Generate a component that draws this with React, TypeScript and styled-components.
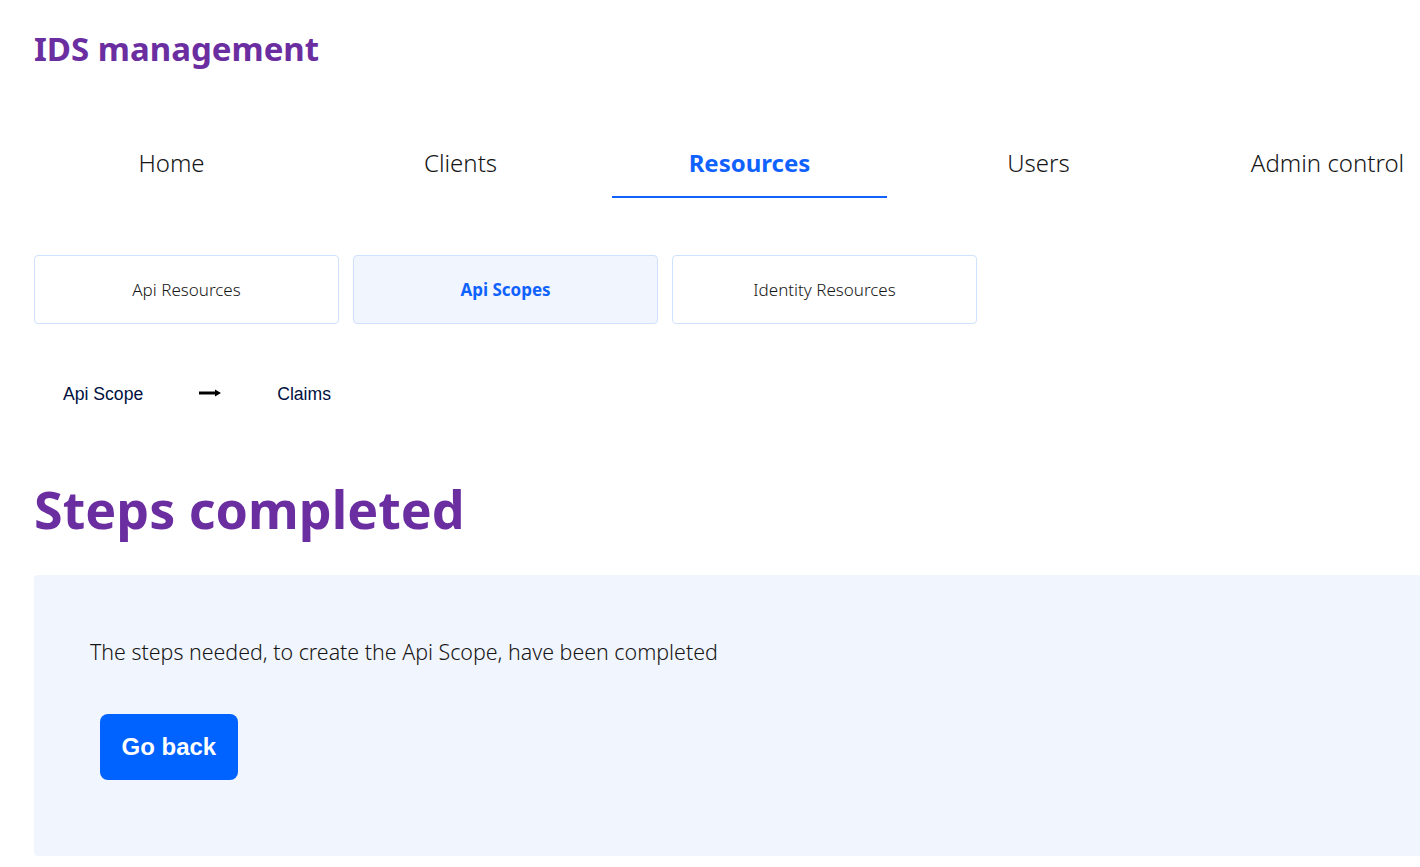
import React, { useState } from 'react';
import styled, { createGlobalStyle } from 'styled-components';

const GlobalStyle = createGlobalStyle`
  body {
    margin: 0;
    background: #ffffff;
    font-family: "Noto Sans", "Open Sans", sans-serif;
    color: #161616;
  }
`;

const Page = styled.div`
  padding: 0 0 0 34px;
  width: 1470px;
`;

const Brand = styled.h1`
  margin: 0;
  padding-top: 26px;
  height: 130px;
  box-sizing: border-box;
  font-size: 33px;
  font-weight: 700;
  color: #6b2ea1;
  line-height: 46px;
`;

const Nav = styled.nav`
  display: flex;
  gap: 14px;
`;

const NavTab = styled.div<{ $active?: boolean }>`
  width: 275px;
  height: 68px;
  display: flex;
  align-items: center;
  justify-content: center;
  box-sizing: border-box;
  padding-bottom: 2px;
  font-size: 24px;
  font-weight: ${p => (p.$active ? 700 : 300)};
  color: ${p => (p.$active ? '#0f62fe' : '#161616')};
  border-bottom: 2px solid ${p => (p.$active ? '#0f62fe' : 'transparent')};
  cursor: pointer;
`;

const SubNav = styled.div`
  display: flex;
  gap: 14px;
  margin-top: 57px;
`;

const SubTab = styled.div<{ $active?: boolean }>`
  width: 305px;
  height: 69px;
  box-sizing: border-box;
  border: 1px solid #d0e2ff;
  border-radius: 4px;
  display: flex;
  align-items: center;
  justify-content: center;
  font-size: 17px;
  font-weight: ${p => (p.$active ? 700 : 300)};
  color: ${p => (p.$active ? '#0f62fe' : '#161616')};
  background: ${p => (p.$active ? '#f1f5fd' : '#ffffff')};
  cursor: pointer;
`;

const Crumbs = styled.div`
  display: flex;
  align-items: center;
  margin-top: 56px;
  padding-left: 29px;
  height: 28px;
  font-family: "Liberation Sans", Arial, sans-serif;
  font-size: 17.6px;
  color: #001141;
`;

const Crumb = styled.span``;

const Arrow = styled.span`
  display: inline-flex;
  margin: 0 56px 3px 56px;
  color: #000000;
`;

const Heading = styled.h2`
  margin: 65px 0 0 0;
  font-size: 52px;
  font-weight: 700;
  color: #6b2ea1;
  line-height: 72px;
`;

const Panel = styled.section`
  margin-top: 30px;
  background: #f1f5fd;
  border-radius: 4px 0 0 4px;
  height: 281px;
  padding: 62px 0 0 56px;
  box-sizing: border-box;
`;

const Message = styled.p`
  margin: 0;
  font-size: 21.4px;
  font-weight: 300;
  line-height: 30px;
  color: #161616;
`;

const BackButton = styled.button`
  margin: 47px 0 0 10px;
  height: 66px;
  padding: 0 21.5px;
  border: none;
  border-radius: 8px;
  background: #0062ff;
  color: #ffffff;
  font-family: "Liberation Sans", Arial, sans-serif;
  font-size: 24px;
  font-weight: 700;
  cursor: pointer;
`;

const tabs = ['Home', 'Clients', 'Resources', 'Users', 'Admin control'];
const subTabs = ['Api Resources', 'Api Scopes', 'Identity Resources'];

function App() {
  const [tab, setTab] = useState('Resources');
  const [sub, setSub] = useState('Api Scopes');

  return (
    <>
      <GlobalStyle />
      <Page>
        <Brand>IDS management</Brand>
        <Nav>
          {tabs.map(t => (
            <NavTab key={t} $active={t === tab} onClick={() => setTab(t)}>
              {t}
            </NavTab>
          ))}
        </Nav>
        <SubNav>
          {subTabs.map(s => (
            <SubTab key={s} $active={s === sub} onClick={() => setSub(s)}>
              {s}
            </SubTab>
          ))}
        </SubNav>
        <Crumbs>
          <Crumb>Api Scope</Crumb>
          <Arrow>
            <svg width="22" height="10" viewBox="0 0 22 10">
              <path d="M0 5h17" stroke="#000" strokeWidth="3" />
              <path d="M16 1.5l6 3.5-6 3.5z" fill="#000" />
            </svg>
          </Arrow>
          <Crumb>Claims</Crumb>
        </Crumbs>
        <Heading>Steps completed</Heading>
        <Panel>
          <Message>The steps needed, to create the Api Scope, have been completed</Message>
          <BackButton>Go back</BackButton>
        </Panel>
      </Page>
    </>
  );
}

export default App;
